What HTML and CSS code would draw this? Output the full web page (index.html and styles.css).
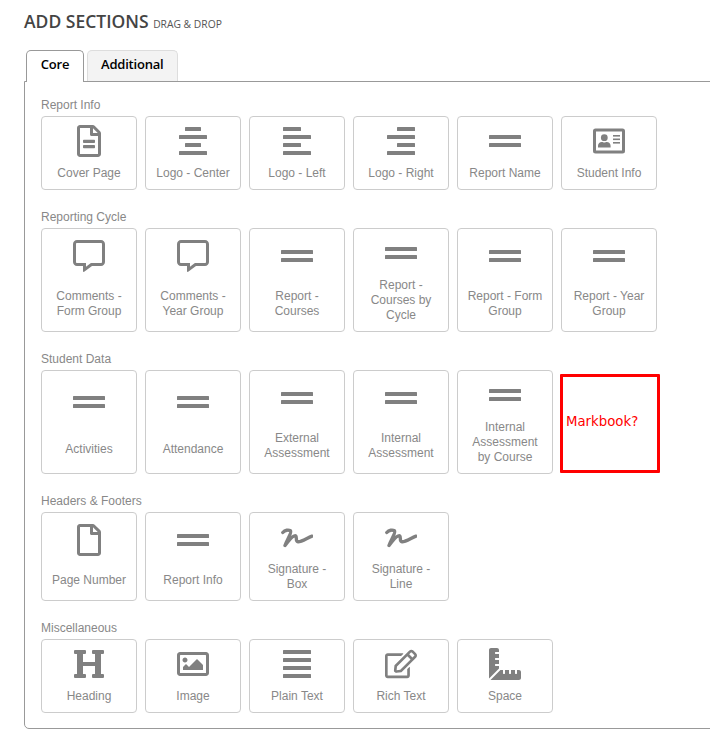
FILE: index.html
```html
<!DOCTYPE html>
<html lang="en">
<head>
<meta charset="utf-8">
<title>Add Sections</title>
<link rel="stylesheet" href="styles.css">
</head>
<body>
<svg class="defs" width="0" height="0" aria-hidden="true">
  <symbol id="i-doc" viewBox="0 0 384 512"><path d="M288 248v28c0 6.6-5.4 12-12 12H108c-6.6 0-12-5.4-12-12v-28c0-6.6 5.4-12 12-12h168c6.6 0 12 5.4 12 12zm-12 72H108c-6.6 0-12 5.4-12 12v28c0 6.6 5.4 12 12 12h168c6.6 0 12-5.4 12-12v-28c0-6.6-5.4-12-12-12zm108-188.1V464c0 26.5-21.5 48-48 48H48c-26.5 0-48-21.5-48-48V48C0 21.5 21.5 0 48 0h204.1C264.8 0 277 5.1 286 14.1L369.9 98c9 8.9 14.1 21.2 14.1 33.9zm-128-80V128h76.1L256 51.9zM336 464V176H232c-13.3 0-24-10.7-24-24V48H48v416h288z"/></symbol>
  <symbol id="i-file" viewBox="0 0 384 512"><path d="M369.9 97.9L286 14C277 5 264.8-.1 252.1-.1H48C21.5 0 0 21.5 0 48v416c0 26.5 21.5 48 48 48h288c26.5 0 48-21.5 48-48V131.9c0-12.7-5.1-25-14.1-34zM332.1 128H256V51.9l76.1 76.1zM48 464V48h160v104c0 13.3 10.7 24 24 24h104v288H48z"/></symbol>
  <symbol id="i-center" viewBox="0 0 32 32"><rect x="8" y="2" width="16" height="4" rx=".5"/><rect x="2" y="10" width="28" height="4" rx=".5"/><rect x="8" y="18" width="16" height="4" rx=".5"/><rect x="2" y="26" width="28" height="4" rx=".5"/></symbol>
  <symbol id="i-left" viewBox="0 0 32 32"><rect x="2" y="2" width="18" height="4" rx=".5"/><rect x="2" y="10" width="28" height="4" rx=".5"/><rect x="2" y="18" width="18" height="4" rx=".5"/><rect x="2" y="26" width="28" height="4" rx=".5"/></symbol>
  <symbol id="i-right" viewBox="0 0 32 32"><rect x="12" y="2" width="18" height="4" rx=".5"/><rect x="2" y="10" width="28" height="4" rx=".5"/><rect x="12" y="18" width="18" height="4" rx=".5"/><rect x="2" y="26" width="28" height="4" rx=".5"/></symbol>
  <symbol id="i-justify" viewBox="0 0 32 32"><rect x="2" y="2" width="28" height="4" rx=".5"/><rect x="2" y="10" width="28" height="4" rx=".5"/><rect x="2" y="18" width="28" height="4" rx=".5"/><rect x="2" y="26" width="28" height="4" rx=".5"/></symbol>
  <symbol id="i-equals" viewBox="0 0 32 32"><rect y="10" width="32" height="4" rx=".5"/><rect y="18" width="32" height="4" rx=".5"/></symbol>
  <symbol id="i-id" viewBox="0 0 32 32"><path fill-rule="evenodd" d="M2.5 3.500h27a2.500 2.500 0 0 1 2.500 2.500v20a2.500 2.500 0 0 1-2.500 2.500h-27a2.500 2.500 0 0 1-2.500-2.500v-20a2.500 2.500 0 0 1 2.500-2.500zM3 6.500v19h26v-19z"/><circle cx="11.300" cy="12.700" r="3.400"/><path d="M5 22.500v-1.800c0-2.200 1.800-3.700 3.800-3.700 1 0 1.500.5 2.500.5s1.500-.5 2.500-.5c2 0 3.800 1.500 3.800 3.700v1.800z"/><rect x="20" y="10" width="7" height="1.600"/><rect x="20" y="13.500" width="7" height="1.600"/><rect x="20" y="17" width="7" height="1.600"/></symbol>
  <symbol id="i-comment" viewBox="0 0 512 512"><path d="M448 0H64C28.7 0 0 28.7 0 64v288c0 35.3 28.7 64 64 64h96v84c0 9.8 11.2 15.5 19.1 9.7L304 416h144c35.3 0 64-28.7 64-64V64c0-35.3-28.7-64-64-64zm16 352c0 8.800-7.200 16-16 16H288l-12.800 9.600L208 428v-60H64c-8.800 0-16-7.200-16-16V64c0-8.800 7.200-16 16-16h384c8.800 0 16 7.200 16 16v288z"/></symbol>
  <symbol id="i-sign" viewBox="0 0 32 32"><path fill="none" stroke-width="3.400" stroke-linecap="round" stroke-linejoin="round" d="M1.800 11.500C4 9 7.500 8.500 9.500 9.800 11 11.500 6.500 18 4 24.500 8 19 12 14 14.500 14.800 16.500 16 14 20.500 17 20.800 21 21 26 17 31 15.200"/></symbol>
  <symbol id="i-heading" viewBox="0 0 512 512"><path d="M448 96v320h32a16 16 0 0 1 16 16v32a16 16 0 0 1-16 16H320a16 16 0 0 1-16-16v-32a16 16 0 0 1 16-16h32V288H160v128h32a16 16 0 0 1 16 16v32a16 16 0 0 1-16 16H32a16 16 0 0 1-16-16v-32a16 16 0 0 1 16-16h32V96H32a16 16 0 0 1-16-16V48a16 16 0 0 1 16-16h160a16 16 0 0 1 16 16v32a16 16 0 0 1-16 16h-32v128h192V96h-32a16 16 0 0 1-16-16V48a16 16 0 0 1 16-16h160a16 16 0 0 1 16 16v32a16 16 0 0 1-16 16z"/></symbol>
  <symbol id="i-image" viewBox="0 0 512 512"><path d="M464 64H48C21.490 64 0 85.490 0 112v288c0 26.510 21.490 48 48 48h416c26.510 0 48-21.490 48-48V112c0-26.510-21.490-48-48-48zm-6 336H54a6 6 0 0 1-6-6V118a6 6 0 0 1 6-6h404a6 6 0 0 1 6 6v276a6 6 0 0 1-6 6zM128 152c-22.091 0-40 17.909-40 40s17.909 40 40 40 40-17.909 40-40-17.909-40-40-40zM96 352h320v-80l-87.515-87.515c-4.686-4.686-12.284-4.686-16.971 0L192 304l-39.515-39.515c-4.686-4.686-12.284-4.686-16.971 0L96 304v48z"/></symbol>
  <symbol id="i-edit" viewBox="0 -32 576 576"><path d="M402.300 344.900l32-32c5-5 13.700-1.500 13.700 5.700V464c0 26.500-21.500 48-48 48H48c-26.500 0-48-21.500-48-48V112c0-26.500 21.500-48 48-48h273.500c7.100 0 10.700 8.600 5.700 13.700l-32 32c-1.500 1.500-3.500 2.300-5.700 2.300H48v352h352V350.500c0-2.100.8-4.100 2.300-5.600zm156.600-201.800L296.300 405.700l-90.400 10c-26.200 2.900-48.500-19.200-45.600-45.600l10-90.400L432.900 17.100c22.900-22.900 59.900-22.900 82.700 0l43.200 43.200c22.900 22.900 22.900 60 .1 82.800zM460.100 174L402 115.900 216.200 301.800l-7.300 65.300 65.300-7.300L460.100 174zm64.800-79.700l-43.200-43.200c-4.100-4.100-10.800-4.100-14.800 0L436 82l58.100 58.100 30.900-30.900c4-4.200 4-10.800-.1-14.900z"/></symbol>
  <symbol id="i-ruler" viewBox="0 0 512 512"><path d="M160 288h-56c-4.420 0-8-3.580-8-8v-16c0-4.420 3.580-8 8-8h56v-64h-56c-4.420 0-8-3.580-8-8v-16c0-4.420 3.580-8 8-8h56V96h-56c-4.420 0-8-3.580-8-8V72c0-4.420 3.580-8 8-8h56V32c0-17.670-14.330-32-32-32H32C14.330 0 0 14.330 0 32v448c0 2.770.91 5.240 1.570 7.800L160 329.380V288zm320 64h-32v56c0 4.420-3.580 8-8 8h-16c-4.420 0-8-3.580-8-8v-56h-64v56c0 4.420-3.580 8-8 8h-16c-4.420 0-8-3.580-8-8v-56h-64v56c0 4.420-3.580 8-8 8h-16c-4.420 0-8-3.580-8-8v-56h-41.370L24.200 510.430c2.560.66 5.040 1.570 7.800 1.570h448c17.670 0 32-14.330 32-32v-96c0-17.670-14.330-32-32-32z"/></symbol>
</svg>

<main class="page">
  <h1 class="title">ADD SECTIONS <small class="title-sub">DRAG &amp; DROP</small></h1>

  <div class="tabs">
    <div class="tab tab-active">Core</div>
    <div class="tab">Additional</div>
  </div>

  <div class="panel">
    <section class="group">
      <h2 class="group-title">Report Info</h2>
      <div class="row row-sm">
        <div class="tile"><span class="icon"><svg class="glyph"><use href="#i-doc"/></svg></span><span class="label">Cover Page</span></div>
        <div class="tile"><span class="icon"><svg class="glyph"><use href="#i-center"/></svg></span><span class="label">Logo - Center</span></div>
        <div class="tile"><span class="icon"><svg class="glyph"><use href="#i-left"/></svg></span><span class="label">Logo - Left</span></div>
        <div class="tile"><span class="icon"><svg class="glyph"><use href="#i-right"/></svg></span><span class="label">Logo - Right</span></div>
        <div class="tile"><span class="icon"><svg class="glyph"><use href="#i-equals"/></svg></span><span class="label">Report Name</span></div>
        <div class="tile"><span class="icon"><svg class="glyph"><use href="#i-id"/></svg></span><span class="label">Student Info</span></div>
      </div>
    </section>

    <section class="group">
      <h2 class="group-title">Reporting Cycle</h2>
      <div class="row row-lg">
        <div class="tile"><span class="icon"><svg class="glyph"><use href="#i-comment"/></svg></span><span class="label">Comments - Form Group</span></div>
        <div class="tile"><span class="icon"><svg class="glyph"><use href="#i-comment"/></svg></span><span class="label">Comments - Year Group</span></div>
        <div class="tile"><span class="icon"><svg class="glyph"><use href="#i-equals"/></svg></span><span class="label">Report - Courses</span></div>
        <div class="tile"><span class="icon"><svg class="glyph"><use href="#i-equals"/></svg></span><span class="label">Report - Courses by Cycle</span></div>
        <div class="tile"><span class="icon"><svg class="glyph"><use href="#i-equals"/></svg></span><span class="label">Report - Form Group</span></div>
        <div class="tile"><span class="icon"><svg class="glyph"><use href="#i-equals"/></svg></span><span class="label">Report - Year Group</span></div>
      </div>
    </section>

    <section class="group">
      <h2 class="group-title">Student Data</h2>
      <div class="row row-lg">
        <div class="tile"><span class="icon"><svg class="glyph"><use href="#i-equals"/></svg></span><span class="label">Activities</span></div>
        <div class="tile"><span class="icon"><svg class="glyph"><use href="#i-equals"/></svg></span><span class="label">Attendance</span></div>
        <div class="tile"><span class="icon"><svg class="glyph"><use href="#i-equals"/></svg></span><span class="label">External Assessment</span></div>
        <div class="tile"><span class="icon"><svg class="glyph"><use href="#i-equals"/></svg></span><span class="label">Internal Assessment</span></div>
        <div class="tile"><span class="icon"><svg class="glyph"><use href="#i-equals"/></svg></span><span class="label">Internal Assessment by Course</span></div>
        <div class="callout">Markbook?</div>
      </div>
    </section>

    <section class="group">
      <h2 class="group-title">Headers &amp; Footers</h2>
      <div class="row row-md">
        <div class="tile"><span class="icon"><svg class="glyph"><use href="#i-file"/></svg></span><span class="label">Page Number</span></div>
        <div class="tile"><span class="icon"><svg class="glyph"><use href="#i-equals"/></svg></span><span class="label">Report Info</span></div>
        <div class="tile"><span class="icon"><svg class="glyph"><use href="#i-sign"/></svg></span><span class="label">Signature - Box</span></div>
        <div class="tile"><span class="icon"><svg class="glyph"><use href="#i-sign"/></svg></span><span class="label">Signature - Line</span></div>
      </div>
    </section>

    <section class="group">
      <h2 class="group-title">Miscellaneous</h2>
      <div class="row row-sm">
        <div class="tile"><span class="icon"><svg class="glyph"><use href="#i-heading"/></svg></span><span class="label">Heading</span></div>
        <div class="tile"><span class="icon"><svg class="glyph"><use href="#i-image"/></svg></span><span class="label">Image</span></div>
        <div class="tile"><span class="icon"><svg class="glyph"><use href="#i-justify"/></svg></span><span class="label">Plain Text</span></div>
        <div class="tile"><span class="icon"><svg class="glyph"><use href="#i-edit"/></svg></span><span class="label">Rich Text</span></div>
        <div class="tile"><span class="icon"><svg class="glyph"><use href="#i-ruler"/></svg></span><span class="label">Space</span></div>
      </div>
    </section>
  </div>
</main>
</body>
</html>
```

FILE: styles.css
```css
* { box-sizing: border-box; }

html, body {
  margin: 0;
  height: 100%;
  overflow: hidden;
  background: #fff;
}

body {
  font-family: "Liberation Sans", Arial, sans-serif;
  font-size: 12px;
  line-height: 15px;
  color: #888;
}

.defs { display: block; height: 0; }

.page {
  width: 710px;
  padding: 10px 0 0 24px;
}

.title {
  margin: 0 0 18px;
  height: 22px;
  font-family: "Open Sans", sans-serif;
  font-size: 17.5px;
  line-height: 22px;
  font-weight: 600;
  color: #444;
  white-space: nowrap;
}

.title-sub {
  font-size: 10.3px;
  font-weight: 400;
  color: #555;
}

.tabs {
  display: flex;
  gap: 3px;
  margin: 0 0 -1px 2px;
  position: relative;
  z-index: 1;
}

.tab {
  height: 31px;
  padding: 0 13px;
  border: 1px solid #ddd;
  border-bottom: 0;
  border-radius: 5px 5px 0 0;
  background: #f3f3f3;
  font-family: "Open Sans", sans-serif;
  font-size: 13px;
  letter-spacing: -0.2px;
  line-height: 26px;
  font-weight: 600;
  text-align: center;
  color: #000;
}

.tab-active {
  width: 58px;
  height: 32px;
  padding: 0;
  border-color: #999;
  background: #fff;
}

.panel {
  width: 720px;
  padding: 0 16px 15px;
  border: 1px solid #999;
  border-radius: 0 0 5px 5px;
}

.group-title {
  margin: 20px 0 3px;
  font-size: 12px;
  line-height: 15px;
  font-weight: 400;
  color: #888;
}

.group:first-child .group-title { margin-top: 16px; }

.row {
  display: flex;
  gap: 8px;
}

.row-sm { height: 74px; }
.row-md { height: 89px; }
.row-lg { height: 104px; }

.tile {
  width: 96px;
  display: flex;
  flex-direction: column;
  align-items: center;
  justify-content: space-around;
  border: 1px solid #ccc;
  border-radius: 4px;
  background: #fff;
}

.icon {
  display: flex;
  justify-content: center;
  align-items: center;
  width: 100%;
  height: 28.6px;
  margin-bottom: -8.6px;
}

.glyph {
  flex: none;
  width: 32px;
  height: 32px;
  overflow: visible;
  fill: #808080;
  stroke: #808080;
  stroke-width: 0;
}

.label {
  display: block;
  width: 100%;
  padding: 1px 7px 0;
  margin-bottom: -1px;
  text-align: center;
  color: #888;
}

.callout {
  align-self: flex-start;
  width: 100px;
  height: 99px;
  margin: 4px 0 0 -1px;
  padding: 0 3px 5px;
  display: flex;
  align-items: center;
  border: 3px solid #f00;
  border-radius: 1px;
  font-family: "DejaVu Sans", Verdana, sans-serif;
  font-size: 13.3px;
  color: #f00;
}
```
